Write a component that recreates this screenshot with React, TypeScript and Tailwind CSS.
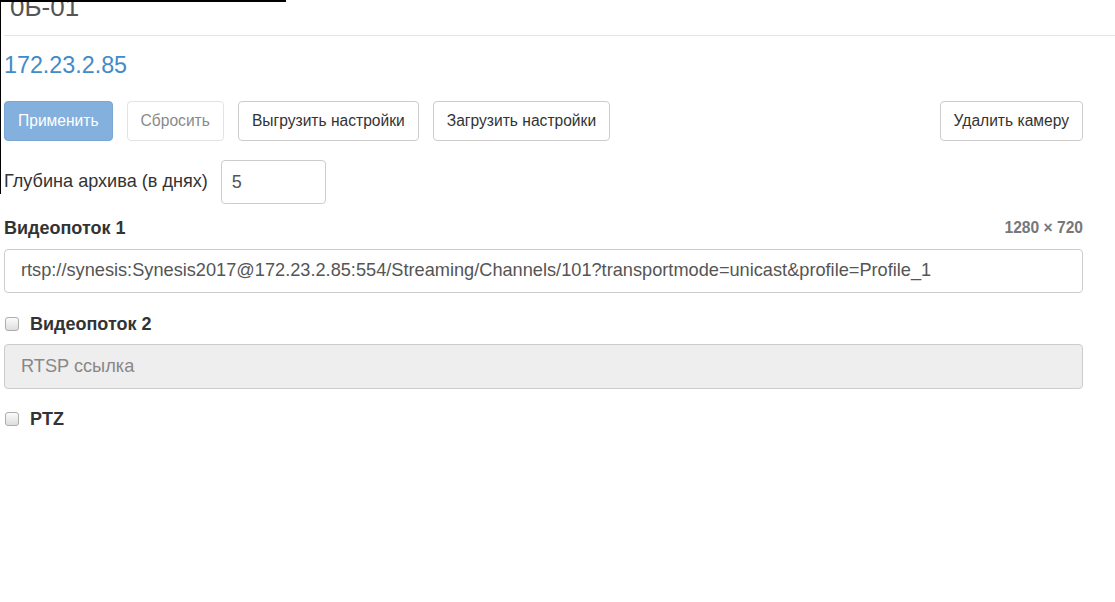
import React from 'react';

const font = 'font-["Liberation_Sans",Arial,sans-serif]';

function Btn({ children, variant = 'default' }: { children: React.ReactNode; variant?: 'primary' | 'muted' | 'default' }) {
  const styles = {
    primary: 'bg-[#83b0dc] border-[#7aa6d3] text-white',
    muted: 'bg-white border-[#e3e3e3] text-[#8a8a8a]',
    default: 'bg-white border-[#cccccc] text-[#333]',
  };
  return (
    <button className={`h-[40px] px-[13px] rounded-[4px] border text-[15.6px] leading-none ${styles[variant]}`}>
      {children}
    </button>
  );
}

function Check({ label }: { label: string }) {
  return (
    <label className="h-[24px] flex items-center gap-[11px] pl-[1px]">
      <span className="w-[14px] h-[14px] rounded-[3px] border border-[#adadad] bg-gradient-to-b from-[#fbfbfb] to-[#dedede]" />
      <span className="font-bold text-[18px] text-[#333]">{label}</span>
    </label>
  );
}

export default function App() {
  return (
    <div className={`relative w-[1115px] h-[602px] bg-white overflow-hidden ${font}`}>
      {/* stray outline over the corner */}
      <div className="absolute left-0 top-0 w-[286px] h-[2px] bg-black" />
      <div className="absolute left-0 top-0 w-px h-[194px] bg-black" />

      <div className="-mt-[10px] pl-[10px] text-[26px] leading-[34px] text-[#555]">0Б-01</div>
      <div className="ml-[4px] mt-[11px] h-px bg-[#e5e5e5]" />

      <div className="pl-[4px] pr-[32px]">
        <div className="mt-[16px] text-[23.3px] leading-[26px] text-[#428bca]">172.23.2.85</div>

        <div className="mt-[23px] flex gap-[14px]">
          <Btn variant="primary">Применить</Btn>
          <Btn variant="muted">Сбросить</Btn>
          <Btn>Выгрузить настройки</Btn>
          <Btn>Загрузить настройки</Btn>
          <div className="flex-1" />
          <Btn>Удалить камеру</Btn>
        </div>

        <div className="mt-[19px] flex items-center gap-[13px]">
          <span className="text-[18.1px] text-[#333]">Глубина архива (в днях)</span>
          <div className="w-[105px] h-[44px] rounded-[4px] border border-[#cccccc] pl-[10px] flex items-center text-[18px] text-[#555]">
            5
          </div>
        </div>

        <div className="mt-[12px] h-[24px] flex items-center justify-between">
          <span className="font-bold text-[18px] text-[#333]">Видеопоток 1</span>
          <span className="font-bold text-[15.6px] text-[#777]">1280 × 720</span>
        </div>
        <div className="mt-[9px] h-[44px] rounded-[4px] border border-[#cccccc] pl-[16px] flex items-center text-[18.2px] text-[#555]">
          rtsp://synesis:Synesis2017@172.23.2.85:554/Streaming/Channels/101?transportmode=unicast&amp;profile=Profile_1
        </div>

        <div className="mt-[19px]">
          <Check label="Видеопоток 2" />
        </div>
        <div className="mt-[8px] h-[45px] rounded-[4px] border border-[#cccccc] bg-[#eeeeee] pl-[16px] flex items-center text-[18.2px] text-[#888]">
          RTSP ссылка
        </div>

        <div className="mt-[18px]">
          <Check label="PTZ" />
        </div>
      </div>
    </div>
  );
}
